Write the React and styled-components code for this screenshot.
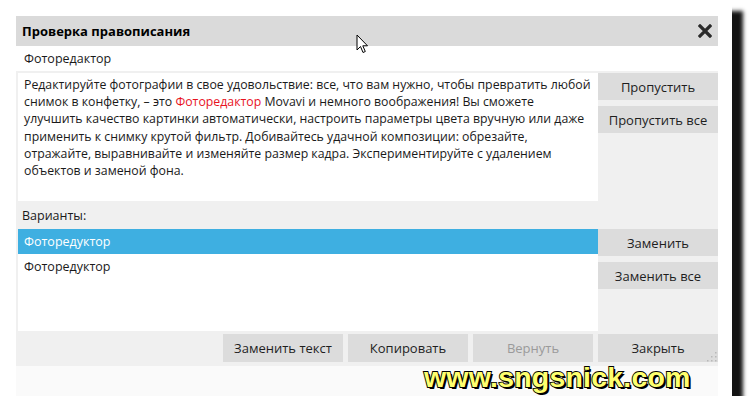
import styled, { createGlobalStyle } from "styled-components";

const GlobalStyle = createGlobalStyle`
  html, body {
    margin: 0;
    padding: 0;
    background: #ffffff;
  }
  body {
    font-family: "Open Sans", "Noto Sans", sans-serif;
  }
`;

const suggestions = ["Фоторедуктор", "Фоторедуктор"];

function App() {
  return (
    <>
      <GlobalStyle />
      <Frame>
        <Dialog>
          <TitleBar>
            <span>Проверка правописания</span>
            <CloseIcon viewBox="0 0 14 14">
              <path d="M2 2 L12 12 M12 2 L2 12" stroke="#2b2b2b" strokeWidth="3.2" strokeLinecap="square" />
            </CloseIcon>
          </TitleBar>
          <WordField>Фоторедактор</WordField>
          <TopArea>
            <TextBox>
              <Line>Редактируйте фотографии в свое удовольствие: все, что вам нужно, чтобы превратить любой</Line>
              <Line>
                снимок в конфетку, – это <span className="misspelled">Фоторедактор</span> Movavi и немного
                воображения! Вы сможете
              </Line>
              <Line>улучшить качество картинки автоматически, настроить параметры цвета вручную или даже</Line>
              <Line>применить к снимку крутой фильтр. Добивайтесь удачной композиции: обрезайте,</Line>
              <Line>отражайте, выравнивайте и изменяйте размер кадра. Экспериментируйте с удалением</Line>
              <Line>объектов и заменой фона.</Line>
            </TextBox>
            <SideButtons>
              <SideButton>Пропустить</SideButton>
              <SideButton>Пропустить все</SideButton>
            </SideButtons>
          </TopArea>
          <Label>Варианты:</Label>
          <ListArea>
            <List>
              {suggestions.map((s, i) => (
                <ListItem key={i} $selected={i === 0}>
                  {s}
                </ListItem>
              ))}
            </List>
            <SideButtons>
              <SideButton>Заменить</SideButton>
              <SideButton>Заменить все</SideButton>
            </SideButtons>
          </ListArea>
          <Footer>
            <FooterButton>Заменить текст</FooterButton>
            <FooterButton>Копировать</FooterButton>
            <FooterButton $disabled>Вернуть</FooterButton>
            <FooterButton>Закрыть</FooterButton>
            <Grip viewBox="0 0 12 12">
              {[
                [10, 2],
                [10, 6],
                [6, 6],
                [10, 10],
                [6, 10],
                [2, 10],
              ].map(([x, y]) => (
                <rect key={`${x}-${y}`} x={x} y={y} width="1.5" height="1.5" fill="#b8b8b8" />
              ))}
            </Grip>
          </Footer>
          <StatusStrip />
          <Watermark>www.sngsnick.com</Watermark>
        </Dialog>
        <Cursor viewBox="0 0 13 20">
          <path
            d="M1 1 L1 16 L4.5 12.5 L7 18.5 L9.3 17.5 L6.8 11.8 L11.5 11.8 Z"
            fill="#ffffff"
            stroke="#000000"
            strokeWidth="1"
            strokeLinejoin="round"
          />
        </Cursor>
      </Frame>
    </>
  );
}

export default App;

const Frame = styled.div`
  position: relative;
  width: 732px;
  height: 396px;
  box-sizing: border-box;
  padding: 16px 14px 0 16px;
  background: #ffffff;
  box-shadow: 11px 11px 4px rgba(0, 0, 0, 0.92);
`;

const Dialog = styled.div`
  position: relative;
  display: flex;
  flex-direction: column;
  height: 380px;
  background: #f0f0f0;
  font-size: 12.5px;
  color: #1a1a1a;
`;

const TitleBar = styled.div`
  display: flex;
  align-items: center;
  justify-content: space-between;
  height: 30px;
  padding: 0 6px;
  background: #dadada;
  font-weight: 700;
  font-size: 13px;
  color: #000;
`;

const CloseIcon = styled.svg`
  width: 14px;
  height: 14px;
`;

const WordField = styled.div`
  display: flex;
  align-items: center;
  height: 25px;
  padding-left: 8px;
  margin-bottom: 2px;
  background: #ffffff;
`;

const TopArea = styled.div`
  display: grid;
  grid-template-columns: 580px 120px;
  height: 128px;
  padding-left: 2px;
`;

const TextBox = styled.div`
  background: #ffffff;
  padding: 3px 6px 0 6px;
  font-size: 12.3px;
  line-height: 17.2px;
  .misspelled {
    color: #e8131f;
  }
`;

const Line = styled.div`
  white-space: nowrap;
`;

const SideButtons = styled.div`
  display: flex;
  flex-direction: column;
  gap: 6px;
`;

const SideButton = styled.div`
  display: flex;
  align-items: center;
  justify-content: center;
  height: 27px;
  background: #dcdcdc;
  font-size: 13px;
  color: #1e1e1e;
`;

const Label = styled.div`
  display: flex;
  align-items: center;
  height: 28px;
  padding-left: 6px;
`;

const ListArea = styled.div`
  display: grid;
  grid-template-columns: 580px 120px;
  height: 102px;
  padding-left: 2px;
`;

const List = styled.div`
  background: #ffffff;
`;

const ListItem = styled.div`
  display: flex;
  align-items: center;
  height: 25px;
  padding-left: 6px;
  background: ${(p) => (p.$selected ? "#3eafe1" : "transparent")};
  color: ${(p) => (p.$selected ? "#ffffff" : "#1a1a1a")};
`;

const Footer = styled.div`
  position: relative;
  display: flex;
  justify-content: flex-end;
  gap: 5px;
  height: 35px;
  padding-top: 3px;
  box-sizing: border-box;
  border-bottom: 4px solid #f0f0f0;
`;

const FooterButton = styled.div`
  display: flex;
  align-items: center;
  justify-content: center;
  width: 120px;
  height: 28px;
  background: #dcdcdc;
  font-size: 13px;
  color: ${(p) => (p.$disabled ? "#9a9a9a" : "#1e1e1e")};
`;

const Grip = styled.svg`
  position: absolute;
  right: 1px;
  bottom: 0;
  width: 12px;
  height: 12px;
`;

const StatusStrip = styled.div`
  flex: 1;
  background: #fafafa;
`;

const Watermark = styled.div`
  position: absolute;
  left: 408px;
  bottom: 5px;
  font-family: "Liberation Sans", Arial, sans-serif;
  font-weight: 700;
  font-size: 28.5px;
  letter-spacing: 0.2px;
  line-height: 1;
  color: #ffff6e;
  -webkit-text-stroke: 1.8px #000;
  paint-order: stroke fill;
  text-shadow: 2px 2px 0 #000;
`;

const Cursor = styled.svg`
  position: absolute;
  left: 356px;
  top: 34px;
  width: 13px;
  height: 20px;
`;
